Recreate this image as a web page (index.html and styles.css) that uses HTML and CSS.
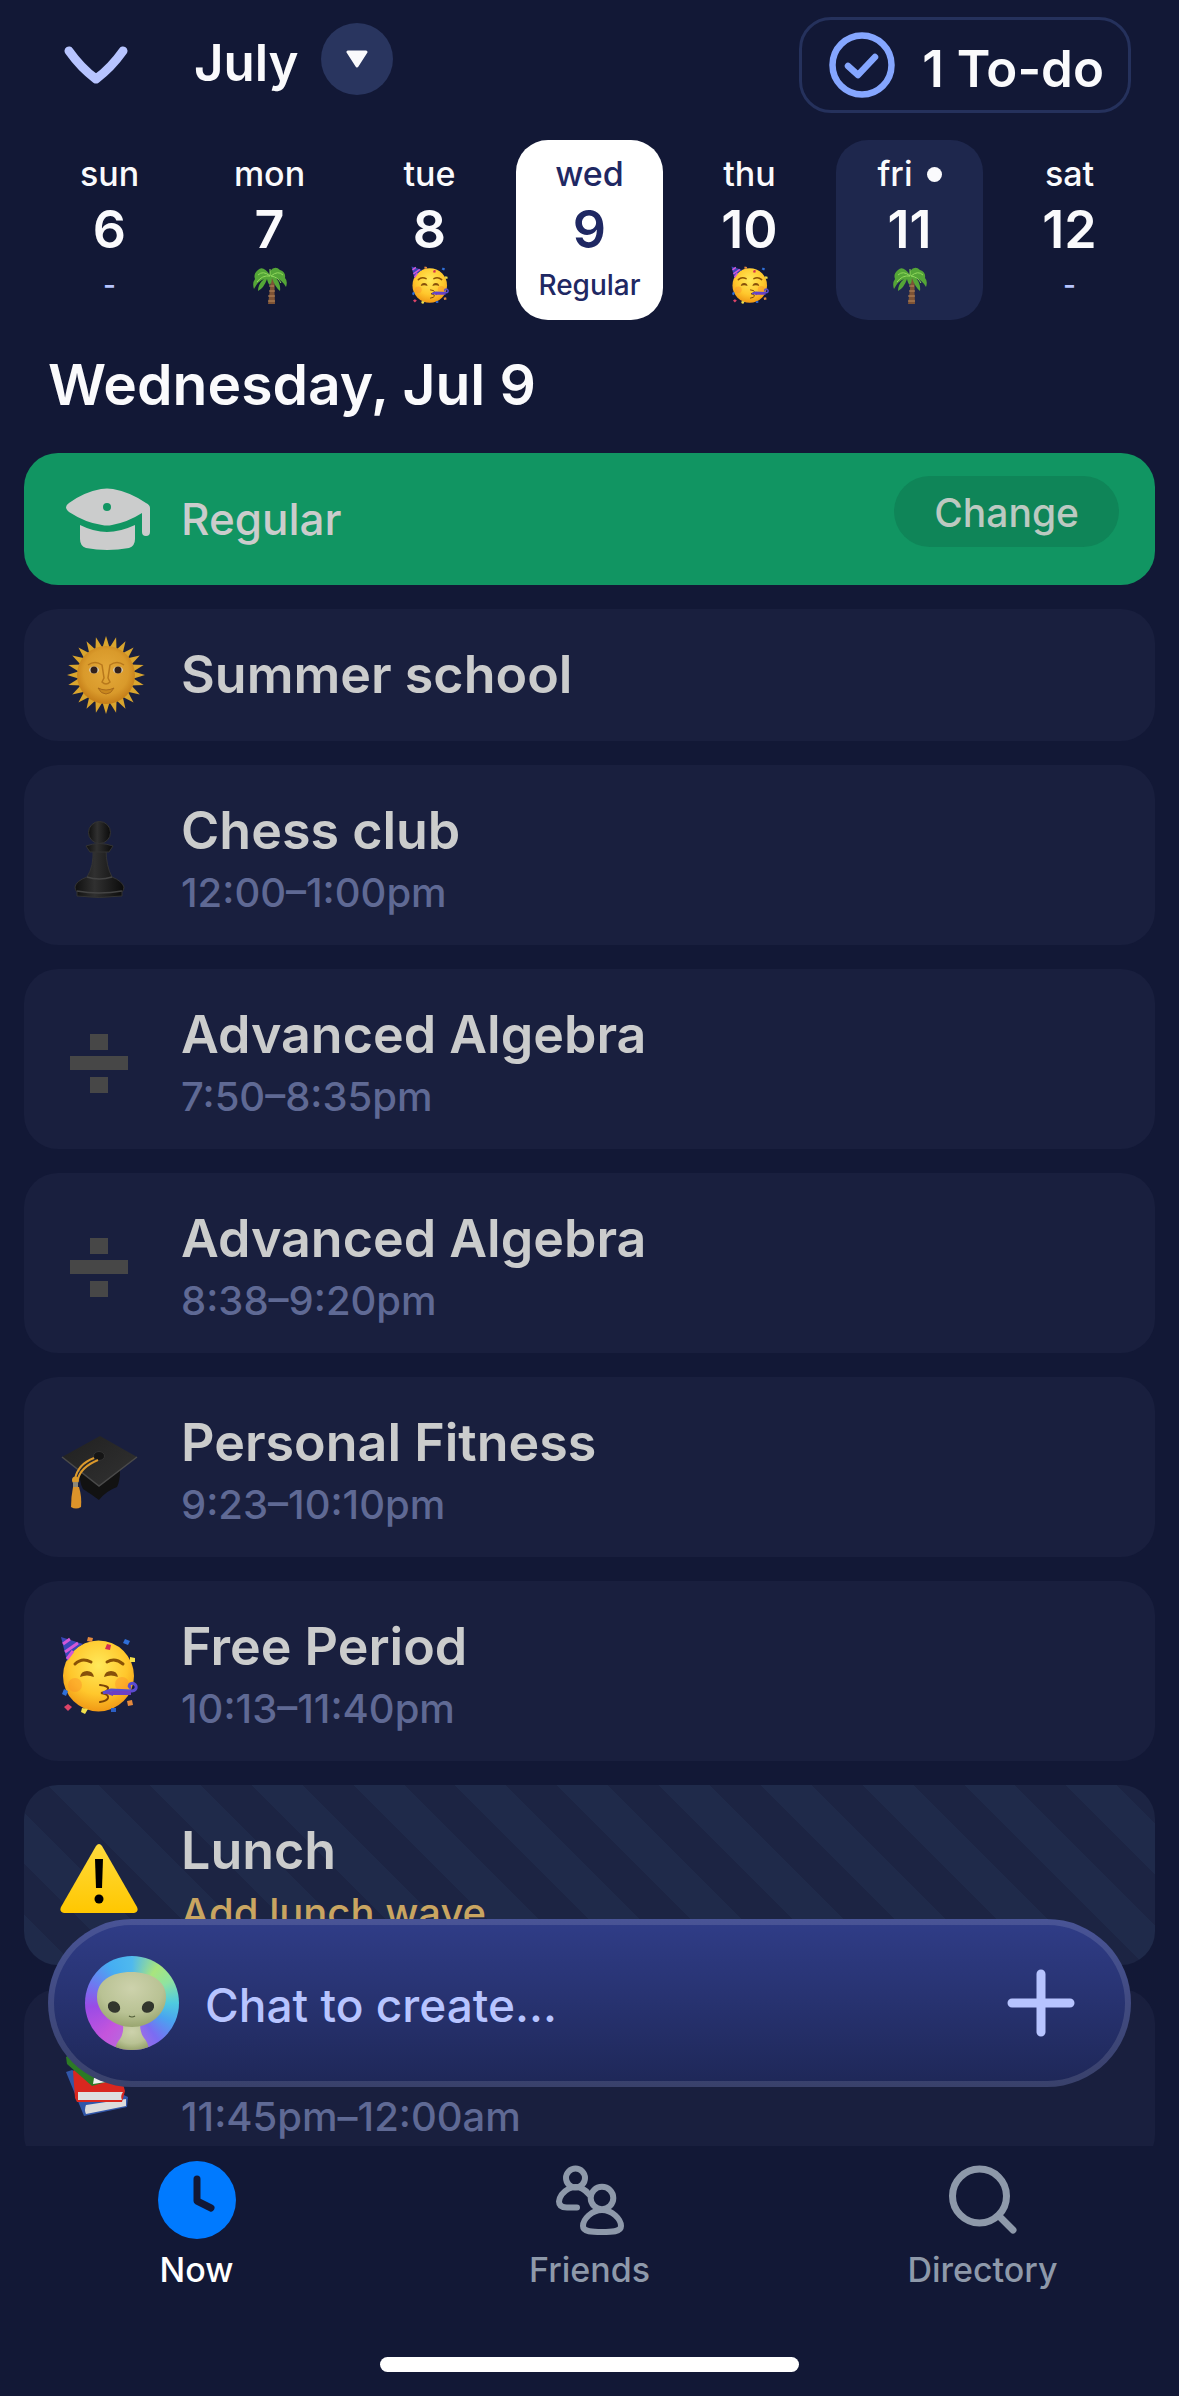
FILE: index.html
```html
<!DOCTYPE html>
<html lang="en">
<head>
    <meta charset="UTF-8">
    <meta name="viewport" content="width=device-width, initial-scale=1.0">
    <title>Schedule</title>
    <link rel="stylesheet" href="styles.css">
</head>
<body>
    <!-- icons used more than once -->
    <svg class="sprite" width="0" height="0" aria-hidden="true">
        <defs>
            <radialGradient id="faceFill" cx="50%" cy="35%" r="68%">
                <stop offset="0" stop-color="#ffe95a" />
                <stop offset="0.6" stop-color="#ffc72c" />
                <stop offset="1" stop-color="#ef9312" />
            </radialGradient>
            <radialGradient id="sunFill" cx="50%" cy="45%" r="55%">
                <stop offset="0" stop-color="#e4a93a" />
                <stop offset="0.7" stop-color="#d99a2b" />
                <stop offset="1" stop-color="#c47c17" />
            </radialGradient>
            <linearGradient id="capFill" x1="0" y1="0" x2="1" y2="1">
                <stop offset="0" stop-color="#202020" />
                <stop offset="1" stop-color="#323232" />
            </linearGradient>
            <linearGradient id="pawnFill" x1="0" y1="0" x2="1" y2="0">
                <stop offset="0" stop-color="#101010" />
                <stop offset="0.4" stop-color="#303030" />
                <stop offset="1" stop-color="#0b0b0b" />
            </linearGradient>
            <linearGradient id="warnFill" x1="0" y1="0" x2="0" y2="1">
                <stop offset="0" stop-color="#ffdb3c" />
                <stop offset="1" stop-color="#ffc700" />
            </linearGradient>
            <radialGradient id="alienFill" cx="50%" cy="30%" r="75%">
                <stop offset="0" stop-color="#cdd2ac" />
                <stop offset="0.6" stop-color="#b9c294" />
                <stop offset="1" stop-color="#93a068" />
            </radialGradient>
            <g id="rays" fill="#d9a52e">
                <path d="M40 3l4 13h-8z" />
                <path d="M40 3l4 13h-8z" transform="rotate(15 40 42)" />
                <path d="M40 3l4 13h-8z" transform="rotate(30 40 42)" />
                <path d="M40 3l4 13h-8z" transform="rotate(45 40 42)" />
                <path d="M40 3l4 13h-8z" transform="rotate(60 40 42)" />
                <path d="M40 3l4 13h-8z" transform="rotate(75 40 42)" />
            </g>
        </defs>
        <symbol id="party" viewBox="0 0 78 78">
            <circle cx="38.5" cy="40" r="35.5" fill="url(#faceFill)" />
            <circle cx="15" cy="49" r="7" fill="#fb8a2a" opacity="0.4" />
            <circle cx="62" cy="48" r="7" fill="#fb8a2a" opacity="0.4" />
            <path d="M1 1L23 8Q12 14 7 25Z" fill="#3a47b8" />
            <path d="M3 8l7-5M5 16l13-9M7 23l6-8" stroke="#d457d6" stroke-width="3" fill="none" />
            <path d="M15 28q7-7 16-2M47 26q8-5 16 2" stroke="#8a5205" stroke-width="3" stroke-linecap="round" fill="none" />
            <path d="M20 41q1-6 7-6t7 6q-7-3-14 0zM44 41q1-6 7-6t7 6q-7-3-14 0z" fill="#86500a" />
            <path d="M40 49q9 1 8 4-1 3-7 4 8 1 7 5-1 3-8 4" stroke="#7a4306" stroke-width="2" stroke-linecap="round" fill="none" />
            <path d="M43 57l8-3 21 1q5-1 4-5-2-4-6-2-2 3 1 4" stroke="#5a4bd0" stroke-width="3" fill="none" />
            <path d="M44 57l9-2v5zM53 55h18v4H53z" fill="#6c3fc4" />
            <path d="M28 1l5 1-1 4-5-1zM67 65l5-1 1 5-5 1z" fill="#e58a3c" />
            <path d="M47 8l4 1-1 5-5-1z" fill="#d52f52" />
            <path d="M65 3l5 2-2 4-5-2zM4 53l4 2-2 5-4-2z" fill="#2f6fd8" />
            <path d="M70 21l5 1v4h-5z" fill="#f4e04a" />
            <path d="M8 68l4 3-4 4-4-4z" fill="#dc4468" />
            <path d="M22 72l6 1-3 5-4-2z" fill="#f2e04c" />
            <path d="M51 72h5v4h-5z" fill="#2c5fc4" />
        </symbol>
        <symbol id="palm" viewBox="0 0 34 38">
            <path d="M18 12q-1 13-3 26h7q-1-14 0-26z" fill="#7e5335" />
            <path d="M16 20h5M16 25h6M15 30h7M15 35h7" stroke="#b98a5c" stroke-width="1" />
            <path d="M17 9Q10-1 5 4 0 8 2 13-1 17 1 23q4-8 10-10-6 5-6 12 6-3 9-12 1 5 3 6 2-3 2-7 3 9 8 13 1-7-4-13 6 2 10 9 2-6-1-9 1-6-5-8-5-5-10 1z" fill="#54a537" />
            <path d="M17 10Q10 4 5 9M17 10Q9 9 4 16M18 10q7-6 12-1M18 10q7 1 10 7M17 10V3" stroke="#91d85c" stroke-width="1" fill="none" />
        </symbol>
        <symbol id="divide" viewBox="0 0 78 78">
            <path d="M30 10h18v16H30zM10 32h58v14H10zM30 53h18v16H30z" fill="#474747" />
        </symbol>
    </svg>

    <header class="topbar">
        <button type="button" class="icon-btn collapse" aria-label="Collapse">
            <svg width="64" height="38" viewBox="0 0 64 38"><path d="M5 5Q17 22 32 33 47 22 59 5" fill="none" stroke="#b7c4ff" stroke-width="9" stroke-linecap="round" stroke-linejoin="round" /></svg>
        </button>
        <div class="month">
            <span class="month-name">July</span>
            <button type="button" class="icon-btn month-btn" aria-label="Choose month">
                <svg width="24" height="18" viewBox="0 0 24 18"><path d="M3 2h18l-9 14z" fill="#fafafc" stroke="#fafafc" stroke-width="3" stroke-linejoin="round" /></svg>
            </button>
        </div>
        <button type="button" class="todo-btn">
            <svg width="66" height="66" viewBox="0 0 66 66" fill="none" stroke="#85a6ff"><circle cx="33" cy="33" r="29.5" stroke-width="6.5" /><path d="M19 34l10 9 17-18" stroke-width="6.5" stroke-linecap="round" stroke-linejoin="round" /></svg>
            <span>1 To-do</span>
        </button>
    </header>

    <nav class="week">
        <a href="#" class="day"><span class="day-name">sun</span><span class="day-num">6</span><span class="day-note">-</span></a>
        <a href="#" class="day"><span class="day-name">mon</span><span class="day-num">7</span><span class="day-note"><svg width="34" height="38"><use href="#palm" /></svg></span></a>
        <a href="#" class="day"><span class="day-name">tue</span><span class="day-num">8</span><span class="day-note"><svg width="38" height="38"><use href="#party" /></svg></span></a>
        <a href="#" class="day selected"><span class="day-name">wed</span><span class="day-num">9</span><span class="day-note">Regular</span></a>
        <a href="#" class="day"><span class="day-name">thu</span><span class="day-num">10</span><span class="day-note"><svg width="38" height="38"><use href="#party" /></svg></span></a>
        <a href="#" class="day today"><span class="day-name">fri<i class="dot"></i></span><span class="day-num">11</span><span class="day-note"><svg width="34" height="38"><use href="#palm" /></svg></span></a>
        <a href="#" class="day"><span class="day-name">sat</span><span class="day-num">12</span><span class="day-note">-</span></a>
    </nav>

    <h1>Wednesday, Jul 9</h1>

    <main>
        <div class="list">
            <section class="card short schedule">
                <svg class="icon" viewBox="0 0 84 84" fill="#cbcccc">
                    <path fill-rule="evenodd" d="M3 26Q-3 30 3 35 20 46 36 48q5 1 10 0Q62 45 76 36v19a4 4 0 0 0 8 0V31q0-3-4-5Q64 15 47 12q-6-1-12 0Q18 15 3 26zM41 26a4 4 0 1 1 0 8 4 4 0 0 1 0-8z" />
                    <path d="M14 48q14 7 27 7t28-7v14q0 7-6 9-22 4-43 0-6-2-6-9z" />
                </svg>
                <h2>Regular</h2>
                <button type="button" class="change-btn">Change</button>
            </section>

            <section class="card short">
                <svg class="icon" viewBox="0 0 84 84">
                    <use href="#rays" />
                    <use href="#rays" transform="rotate(90 40 42)" />
                    <use href="#rays" transform="rotate(180 40 42)" />
                    <use href="#rays" transform="rotate(270 40 42)" />
                    <circle cx="40" cy="42" r="29" fill="url(#sunFill)" />
                    <path d="M22 32q7-5 14 0l2 13-2 4q4 4 8 0l-2-4 2-13q7-5 14 0" fill="none" stroke="#b8781c" stroke-width="1.5" />
                    <path d="M32 55q8 4 16 0-3 6-8 6t-8-6z" fill="#c8871e" stroke="#a8691a" />
                    <ellipse cx="28" cy="37" rx="5" ry="3.5" fill="#d6cdb8" />
                    <ellipse cx="52" cy="37" rx="5" ry="3.5" fill="#d6cdb8" />
                    <circle cx="28" cy="37" r="3.5" fill="#33201a" />
                    <circle cx="52" cy="37" r="3.5" fill="#33201a" />
                </svg>
                <h2>Summer school</h2>
            </section>

            <section class="card">
                <svg class="icon" viewBox="0 0 78 78" fill="url(#pawnFill)" stroke="#333">
                    <path d="M33 29q1 17-6 28-11 4-12 10 0 3 2 5v4q22 3 45 0v-4q2-2 2-5-2-6-12-10-6-11-6-28z" />
                    <path d="M26 26q13-5 27 0l-4 6H30z" />
                    <circle cx="39.5" cy="12.5" r="11" />
                    <path d="M27 57q12 4 25 0M17 71q22 4 45 0" fill="none" stroke="#444" stroke-width="1.5" />
                </svg>
                <div><h2>Chess club</h2><p>12:00–1:00pm</p></div>
            </section>

            <section class="card">
                <svg class="icon"><use href="#divide" /></svg>
                <div><h2>Advanced Algebra</h2><p>7:50–8:35pm</p></div>
            </section>

            <section class="card">
                <svg class="icon"><use href="#divide" /></svg>
                <div><h2>Advanced Algebra</h2><p>8:38–9:20pm</p></div>
            </section>

            <section class="card">
                <svg class="icon" viewBox="0 0 78 78">
                    <path d="M20 38q-1 12 3 19 8 5 16 11 7-9 18-13 3-6 3-16z" fill="#121212" />
                    <path d="M2 25L40 4 77 25 39 54z" fill="url(#capFill)" />
                    <path d="M2 25l37 29 38-29" fill="none" stroke="#4a4a4a" stroke-width="1.5" />
                    <ellipse cx="39" cy="24" rx="5.5" ry="4.5" fill="#151515" stroke="#333" />
                    <path d="M34 26q-16 6-19 21M38 28q-17 7-20 19" fill="none" stroke="#dc9a2c" stroke-width="2" />
                    <circle cx="15.5" cy="48" r="3.5" fill="#dc9a2c" />
                    <path d="M13 50h5v5h-5z" fill="#8e8878" />
                    <path d="M13 55h6q3 10 2 20-5 3-10 0 0-10 2-20z" fill="#dc932a" />
                </svg>
                <div><h2>Personal Fitness</h2><p>9:23–10:10pm</p></div>
            </section>

            <section class="card">
                <svg class="icon"><use href="#party" /></svg>
                <div><h2>Free Period</h2><p>10:13–11:40pm</p></div>
            </section>

            <section class="card striped">
                <svg class="icon" viewBox="0 0 78 78">
                    <path d="M36 6q3-4 6 0l35 61q2 5-3 6H4q-5-1-3-6z" fill="url(#warnFill)" />
                    <path d="M35 19h8l-1 29h-6z" />
                    <circle cx="39" cy="59" r="4.5" />
                </svg>
                <div><h2>Lunch</h2><p class="warn">Add lunch wave</p></div>
            </section>

            <section class="card">
                <svg class="icon" viewBox="0 0 78 78">
                    <path d="M6 28l6-2 56 27-1 10-43 9z" fill="#3156a8" />
                    <path d="M26 61l40-6v7l-40 8q-2-4 0-9z" fill="#dcdcdc" />
                    <path d="M13 27l10-6 38 12 4 14-3 11H17l-2-4z" fill="#d9271f" />
                    <path d="M18 48h45q-3 4-1 8H18z" fill="#dedede" />
                    <path d="M6 13l14-9 32 22-6 12-14 4L7 20z" fill="#2c7a25" />
                    <path d="M34 34l14-2-2 6-13 2z" fill="#f0f0f0" />
                </svg>
                <div><h2></h2><p>11:45pm–12:00am</p></div>
            </section>
        </div>

        <form class="chat">
            <div class="avatar">
                <svg width="94" height="94" viewBox="0 0 94 94">
                    <path d="M38 68q1 9-3 15-4 4-5 11h34q-1-8-5-12-4-5-4-14z" fill="url(#alienFill)" />
                    <path d="M46 16c20 0 35 9 35 25 0 17-16 30-34 30S12 58 12 41c0-16 14-25 34-25z" fill="url(#alienFill)" />
                    <ellipse cx="29" cy="51" rx="6.5" ry="5.5" fill="#32362d" transform="rotate(35 29 51)" />
                    <ellipse cx="63" cy="51" rx="6.5" ry="5.5" fill="#32362d" transform="rotate(-35 63 51)" />
                    <path d="M44 60q3 2 6 0" fill="none" stroke="#4e5a35" stroke-width="1.2" />
                </svg>
            </div>
            <input type="text" placeholder="Chat to create..." aria-label="Chat to create">
            <button type="button" class="icon-btn" aria-label="Add">
                <svg width="68" height="68" viewBox="0 0 68 68"><path d="M34 5v58M5 34h58" stroke="#b7c4ff" stroke-width="9" stroke-linecap="round" /></svg>
            </button>
        </form>
    </main>

    <footer class="tabbar">
        <nav class="tabs">
            <a href="#" class="tab active">
                <svg width="78" height="78" viewBox="0 0 78 78"><circle cx="39" cy="39" r="39" fill="#007aff" /><path d="M39 18v22l14 7" fill="none" stroke="#121836" stroke-width="7" stroke-linecap="round" stroke-linejoin="round" /></svg>
                Now
            </a>
            <a href="#" class="tab">
                <svg width="78" height="78" viewBox="0 0 78 78" fill="none" stroke="#8e99aa" stroke-width="6" stroke-linecap="round">
                    <circle cx="24.5" cy="17" r="9.5" />
                    <circle cx="51" cy="37" r="11.3" />
                    <path d="M26 46.5H16q-8 0-8-6 1-8 10-13 7-3 13 0 4 2 7 6" />
                    <path d="M51 49c-10 0-19 9-19 16 0 6 9 6 19 6s19 0 19-6c0-7-9-16-19-16z" />
                </svg>
                Friends
            </a>
            <a href="#" class="tab">
                <svg width="78" height="78" viewBox="0 0 78 78" fill="none" stroke="#8e99aa" stroke-width="7" stroke-linecap="round"><circle cx="35.5" cy="35" r="27" /><path d="M55 55l14 14" /></svg>
                Directory
            </a>
        </nav>
        <div class="home-bar"></div>
    </footer>
</body>
</html>
```
FILE: styles.css
```css
* {
    box-sizing: border-box;
}
body {
    font-family: Inter, "Liberation Sans", sans-serif;
    font-weight: 500;
    background-color: #121836;
    color: #fafafc;
    display: flex;
    flex-direction: column;
    height: 100vh;
    margin: 0;
}
a {
    color: inherit;
    text-decoration: none;
}
h1, h2, p {
    margin: 0;
}
button, input {
    font-family: inherit;
    font-weight: inherit;
    color: inherit;
    background: none;
    border: none;
    padding: 0;
}
svg {
    display: block;
    flex-shrink: 0;
}
.sprite {
    position: absolute;
}
.icon-btn {
    display: flex;
    align-items: center;
    justify-content: center;
    cursor: pointer;
}

/* top bar */
.topbar {
    display: flex;
    align-items: center;
    padding: 17px 48px 27px 64px;
}
.month {
    display: flex;
    align-items: flex-start;
    align-self: flex-start;
    gap: 22px;
    margin: 6px auto 0 66px;
}
.month-name {
    font-size: 51px;
    font-weight: 600;
    line-height: 80px;
}
.month-btn {
    width: 72px;
    height: 72px;
    border-radius: 50%;
    background-color: #29355f;
}
.todo-btn {
    display: flex;
    align-items: flex-start;
    gap: 27px;
    height: 96px;
    padding: 12px 24px 0 27px;
    border: 3px solid #25315c;
    border-radius: 32px;
    font-size: 51px;
    font-weight: 600;
    line-height: 74px;
    cursor: pointer;
}

/* week strip */
.week {
    display: grid;
    grid-template-columns: repeat(7, 1fr);
    gap: 13px;
    padding: 0 36px;
}
.day {
    display: flex;
    flex-direction: column;
    align-items: center;
    padding: 16px 0 15px;
    border-radius: 32px;
}
.day-name {
    display: flex;
    align-items: center;
    gap: 14px;
    font-size: 34px;
    line-height: 36px;
    margin-bottom: 8px;
}
.day-num {
    font-size: 52px;
    font-weight: 600;
    line-height: 60px;
    margin-bottom: 5px;
}
.day-note {
    display: flex;
    align-items: center;
    height: 40px;
    font-size: 28px;
    color: #b7c4ff;
}
.day.selected,
.day.selected .day-note {
    background-color: #fff;
    color: #1f2863;
}
.day.today {
    background-color: #1e274d;
}
.dot {
    width: 15px;
    height: 15px;
    border-radius: 50%;
    background-color: #fafafc;
}

h1 {
    font-size: 57px;
    font-weight: 600;
    line-height: 72px;
    margin: 29px 48px 32px;
}

/* schedule */
main {
    position: relative;
    flex: 1;
    min-height: 0;
}
.list {
    display: flex;
    flex-direction: column;
    gap: 24px;
    height: 100%;
    padding: 0 24px;
    overflow: hidden;
}
.card {
    display: flex;
    align-items: center;
    flex-shrink: 0;
    gap: 43px;
    padding: 36px 36px 28px;
    border-radius: 34px;
    background-color: #191f3e;
}
.card .icon {
    width: 78px;
    height: 78px;
}
.card h2 {
    min-height: 60px;
    font-size: 52px;
    font-weight: 600;
    line-height: 60px;
    color: #cbcccc;
}
.card p {
    margin-top: 8px;
    font-size: 40px;
    line-height: 48px;
    color: #5f6994;
}
.card .warn {
    color: #c9a561;
}
.card.short {
    gap: 31px;
    padding: 23px 36px 23px 42px;
    min-height: 132px;
}
.card.short .icon {
    width: 84px;
    height: 84px;
}
.card.schedule {
    background-color: #119562;
}
.card.schedule h2 {
    font-size: 44px;
    font-weight: 500;
}
.card.striped {
    background: repeating-linear-gradient(45deg, #1f2a4a 0 36px, #1c2443 36px 72px);
}
.change-btn {
    height: 71px;
    margin: 0 0 15px auto;
    padding: 2px 40px 0;
    border-radius: 36px;
    background-color: #0f8558;
    color: #bcc9c1;
    font-size: 39px;
    cursor: pointer;
}

/* chat bar */
.chat {
    position: absolute;
    left: 48px;
    right: 48px;
    bottom: 59px;
    display: flex;
    align-items: center;
    height: 168px;
    padding: 0 50px 0 31px;
    border: 6px solid rgba(255, 255, 255, 0.12);
    border-radius: 84px;
    background: linear-gradient(#303d88, #1e2757) border-box;
}
.avatar {
    width: 94px;
    height: 94px;
    border-radius: 50%;
    overflow: hidden;
    background: conic-gradient(#4fb9ee, #a9e57d 35deg, #8fe3a0 60deg, #4fcbe0 90deg, #4aa3f0 115deg, #7b6cf2 145deg, #b36fe0 180deg, #c455dc 220deg, #9a4be6 265deg, #6f78f0 295deg, #45aef2 330deg, #4fb9ee);
}
.chat input {
    flex: 1;
    min-width: 0;
    margin: 0 26px;
    padding-top: 4px;
    font-size: 46px;
    outline: none;
}
.chat input::placeholder {
    color: #b7c4ff;
    opacity: 1;
}

/* bottom tabs */
.tabbar {
    padding: 15px 0 24px;
}
.tabs {
    display: grid;
    grid-template-columns: repeat(3, 1fr);
}
.tab {
    display: flex;
    flex-direction: column;
    align-items: center;
    gap: 11px;
    font-size: 34px;
    line-height: 40px;
    color: #8e99aa;
}
.tab.active {
    color: #fff;
}
.home-bar {
    width: 419px;
    height: 15px;
    margin: 67px auto 0;
    border-radius: 8px;
    background-color: #fff;
}
```
